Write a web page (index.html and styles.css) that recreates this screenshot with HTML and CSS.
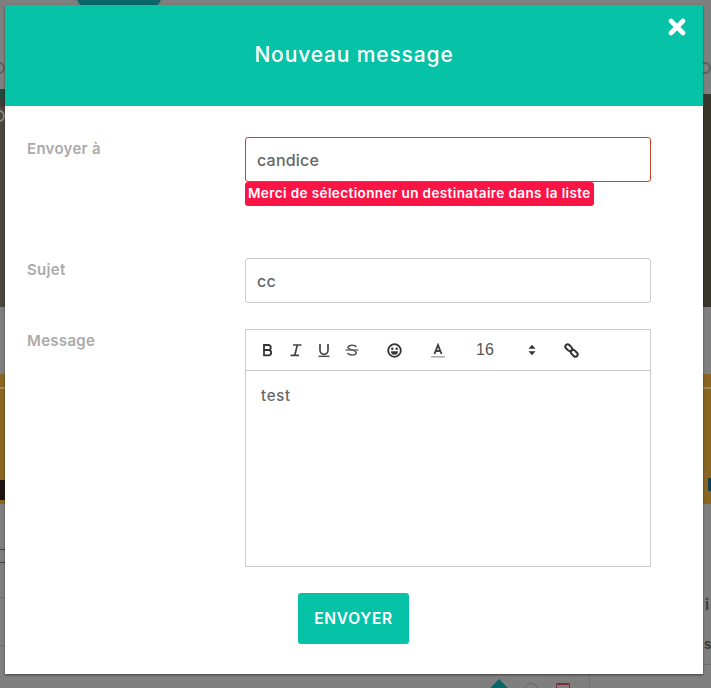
FILE: index.html
```html
<!DOCTYPE html>
<html lang="fr">
<head>
<meta charset="utf-8">
<title>Nouveau message</title>
<link rel="stylesheet" href="styles.css">
</head>
<body>
<div class="backdrop">
  <div class="bg-pill"></div>
  <div class="bg-photo"></div>
  <div class="bg-green"></div>
  <div class="bg-banner"></div>
  <div class="bg-stripe"></div>
  <div class="bg-dark"></div>
  <div class="bg-blue"></div>
  <div class="bg-ham"></div>
  <div class="bg-line bg-line-1"></div>
  <div class="bg-line bg-line-2"></div>
  <div class="bg-line bg-line-3"></div>
  <div class="bg-line bg-line-4"></div>
  <div class="bg-circle bg-circle-l"></div>
  <div class="bg-circle bg-circle-r"></div>
  <div class="bg-circle bg-circle-m"></div>
  <div class="bg-text bg-text-1">i</div>
  <div class="bg-text bg-text-2">s</div>
  <div class="bg-diamond"></div>
  <div class="bg-round"></div>
  <div class="bg-trash"></div>
</div>
<main class="modal">
  <header class="modal-head">
    <h1 class="modal-title">Nouveau message</h1>
    <svg class="close" viewBox="0 0 18 18" width="18" height="18" aria-label="Fermer">
      <path d="M3 3 15 15M15 3 3 15" stroke="#fff" stroke-width="4.6" stroke-linecap="round" fill="none"/>
    </svg>
  </header>
  <form class="form">
    <div class="row row-to">
      <label class="label">Envoyer à</label>
      <div class="field">
        <div class="input input-error">candice</div>
        <div class="error"><span class="error-text">Merci de sélectionner un destinataire dans la liste</span></div>
      </div>
    </div>
    <div class="row row-subject">
      <label class="label">Sujet</label>
      <div class="field"><div class="input">cc</div></div>
    </div>
    <div class="row row-message">
      <label class="label">Message</label>
      <div class="field">
        <div class="editor">
          <div class="toolbar">
            <svg class="tool t-b" width="14" height="14" viewBox="0 0 14 14"><path d="M3 2h4.300a2.500 2.500 0 0 1 0 5H3zM3 7h5a2.700 2.700 0 0 1 0 5.300H3z" fill="none" stroke="#333" stroke-width="1.800"/></svg>
            <svg class="tool t-i" width="14" height="14" viewBox="0 0 14 14"><path d="M4 2h8.500M1.500 12.300h8.500M8.300 2 5.800 12.300" fill="none" stroke="#444" stroke-width="1.700"/></svg>
            <svg class="tool t-u" width="14" height="14" viewBox="0 0 14 14"><path d="M3 1v6.300a4 4 0 0 0 8 0V1" fill="none" stroke="#444" stroke-width="1.700"/><path d="M1.500 13.300h11" stroke="#333" stroke-width="1.200"/></svg>
            <svg class="tool t-s" width="14" height="14" viewBox="0 0 14 14"><path d="M11.300 4C10.500 1.800 3.200 1.500 3 4.500 2.900 6.800 11.400 7 11.300 9.700 11.200 12.700 3.500 12.500 2.700 10" fill="none" stroke="#555" stroke-width="1.500"/><path d="M.5 7h13" stroke="#555" stroke-width="1.200"/></svg>
            <svg class="tool t-e" width="15" height="15" viewBox="0 0 15 15"><circle cx="7.500" cy="7.500" r="6.300" fill="none" stroke="#333" stroke-width="1.800"/><circle cx="5.300" cy="5.800" r="1.200" fill="#333"/><circle cx="9.700" cy="5.800" r="1.200" fill="#333"/><path d="M4 8.300h7a3.500 3.500 0 0 1-7 0z" fill="#333"/></svg>
            <svg class="tool t-a" width="14" height="15" viewBox="0 0 14 15"><path d="M3.500 11 7 2 10.500 11M4.800 8h4.400" fill="none" stroke="#444" stroke-width="1.900"/><path d="M0 13.800h14" stroke="#aaa" stroke-width="1.500"/></svg>
            <span class="size">16</span>
            <svg class="tool t-sort" width="8" height="12" viewBox="0 0 8 12"><path d="M4 .8 7.500 4.800H.5zM4 11.200 .5 7.200h7z" fill="#333"/></svg>
            <svg class="tool t-l" width="15" height="15" viewBox="0 0 15 15"><g fill="none" stroke="#333" stroke-width="2"><rect x="-3.800" y="-2.300" width="7.600" height="4.600" rx="2.300" transform="translate(4.700 4.700) rotate(45)"/><rect x="-3.800" y="-2.300" width="7.600" height="4.600" rx="2.300" transform="translate(10.300 10.300) rotate(45)"/></g></svg>
          </div>
          <div class="editor-body">test</div>
        </div>
      </div>
    </div>
    <div class="actions"><button class="send" type="button">ENVOYER</button></div>
  </form>
</main>
</body>
</html>
```
FILE: styles.css
```css
* { box-sizing: border-box; }
html, body { margin: 0; height: 100%; }
body {
  width: 711px;
  height: 688px;
  overflow: hidden;
  position: relative;
  background: #7f7f7f;
  font-family: "Inter", "Open Sans", sans-serif;
  padding: 5px 8px 14px 5px;
}
.backdrop { position: absolute; inset: 0; overflow: hidden; }
.backdrop > div { position: absolute; }
.bg-pill { left: 77px; top: -10px; width: 84px; height: 16px; border-radius: 10px; background: #0b6669; }
.bg-photo { left: 0; top: 94px; width: 711px; height: 213px; background: linear-gradient(90deg, #4c473c, #37352c); }
.bg-green { left: 0; top: 89px; width: 5px; height: 18px; background: linear-gradient(#1f4a3f 30%, #4a352f); }
.bg-banner { left: 0; top: 374px; width: 711px; height: 130px; background: #8a6622; }
.bg-stripe { left: 0; top: 387px; width: 711px; height: 2px; background: #a08a5c; }
.bg-dark { left: 0; top: 480px; width: 5px; height: 20px; background: #1f1414; }
.bg-blue { left: 708px; top: 478px; width: 3px; height: 13px; background: #123f52; }
.bg-ham { left: 0; top: 549px; width: 5px; height: 14px; border-top: 1px solid #444; border-bottom: 1px solid #444; }
.bg-line { height: 1px; background: #6f6f6f; }
.bg-line-1 { left: 0; top: 597px; width: 5px; }
.bg-line-2 { left: 0; top: 645px; width: 5px; }
.bg-line-3 { left: 703px; top: 664px; width: 8px; }
.bg-line-4 { left: 589px; top: 674px; width: 1px; height: 14px; }
.bg-circle { width: 12px; height: 12px; border: 2px solid #5f5f5f; border-radius: 50%; top: 62px; }
.bg-circle-l { left: -7px; top: 62px; }
.bg-circle-r { left: 699px; }
.bg-circle-m { left: -7px; top: 110px; border-color: #8a8a80; }
.bg-text { font: 700 15px "Inter", sans-serif; color: #3f3f3f; }
.bg-text-1 { left: 705px; top: 595px; }
.bg-text-2 { left: 704px; top: 636px; font-size: 13px; }
.bg-diamond { left: 492px; top: 682px; width: 14px; height: 14px; background: #0b6669; transform: rotate(45deg); }
.bg-round { left: 524px; top: 683px; width: 14px; height: 14px; border: 1px solid #666; border-radius: 50%; }
.bg-trash { left: 556px; top: 683px; width: 14px; height: 10px; border: 1px solid #7d2c3c; border-top-width: 2px; border-radius: 2px 2px 0 0; }

.modal {
  position: relative;
  width: 698px;
  height: 669px;
  background: #fff;
  box-shadow: 0 1px 2px rgba(0, 0, 0, .5);
  display: flex;
  flex-direction: column;
}
.modal-head {
  position: relative;
  height: 101px;
  background: #06c2a7;
  display: flex;
  align-items: center;
  justify-content: center;
  flex: none;
}
.modal-title { margin: 0 0 2px; font-size: 21px; font-weight: 500; color: #fff; letter-spacing: .85px; }
.close { position: absolute; right: 17px; top: 13px; }

.form { display: flex; flex-direction: column; padding: 31px 52px 0 22px; }
.row { display: flex; }
.row-to { height: 121px; }
.row-subject { height: 71px; }
.label { width: 218px; flex: none; font-size: 15px; font-weight: 600; color: #aaa; padding-top: 2px; letter-spacing: .3px; }
.field { flex: 1; min-width: 0; }
.input {
  height: 45px;
  border: 1px solid #ccc;
  border-radius: 3px;
  padding: 0 11px;
  display: flex;
  align-items: center;
  font-size: 16px;
  font-weight: 500;
  letter-spacing: .2px;
  color: #666;
}
.input-error { border-color: #c8451f; }
.error { display: flex; }
.error-text {
  background: #fb1446;
  color: #fff;
  border-radius: 3px;
  font-size: 13.500px;
  font-weight: 600;
  letter-spacing: .4px;
  height: 24px;
  line-height: 23px;
  padding: 0 3px;
  white-space: nowrap;
}
.editor { border: 1px solid #ccc; height: 238px; }
.toolbar { position: relative; height: 41px; border-bottom: 1px solid #ccc; }
.tool { position: absolute; top: 13px; }
.t-b { left: 15px; }
.t-i { left: 43px; }
.t-u { left: 71px; }
.t-s { left: 99px; }
.t-e { left: 141px; }
.t-a { left: 185px; }
.size { position: absolute; left: 230px; top: 11px; font: 16px "Liberation Sans", sans-serif; color: #555; }
.t-sort { left: 282px; top: 14px; }
.t-l { left: 318px; }
.editor-body { padding: 15px; font: 500 15px/20px "Inter", sans-serif; color: #666; letter-spacing: .7px; }
.actions { display: flex; margin-top: 26px; padding-left: 271px; }
.send {
  width: 111px;
  height: 51px;
  border: 0;
  border-radius: 3px;
  background: #06c2a7;
  color: #fff;
  font: 600 15.500px "Inter", sans-serif;
  letter-spacing: .7px;
}
```
